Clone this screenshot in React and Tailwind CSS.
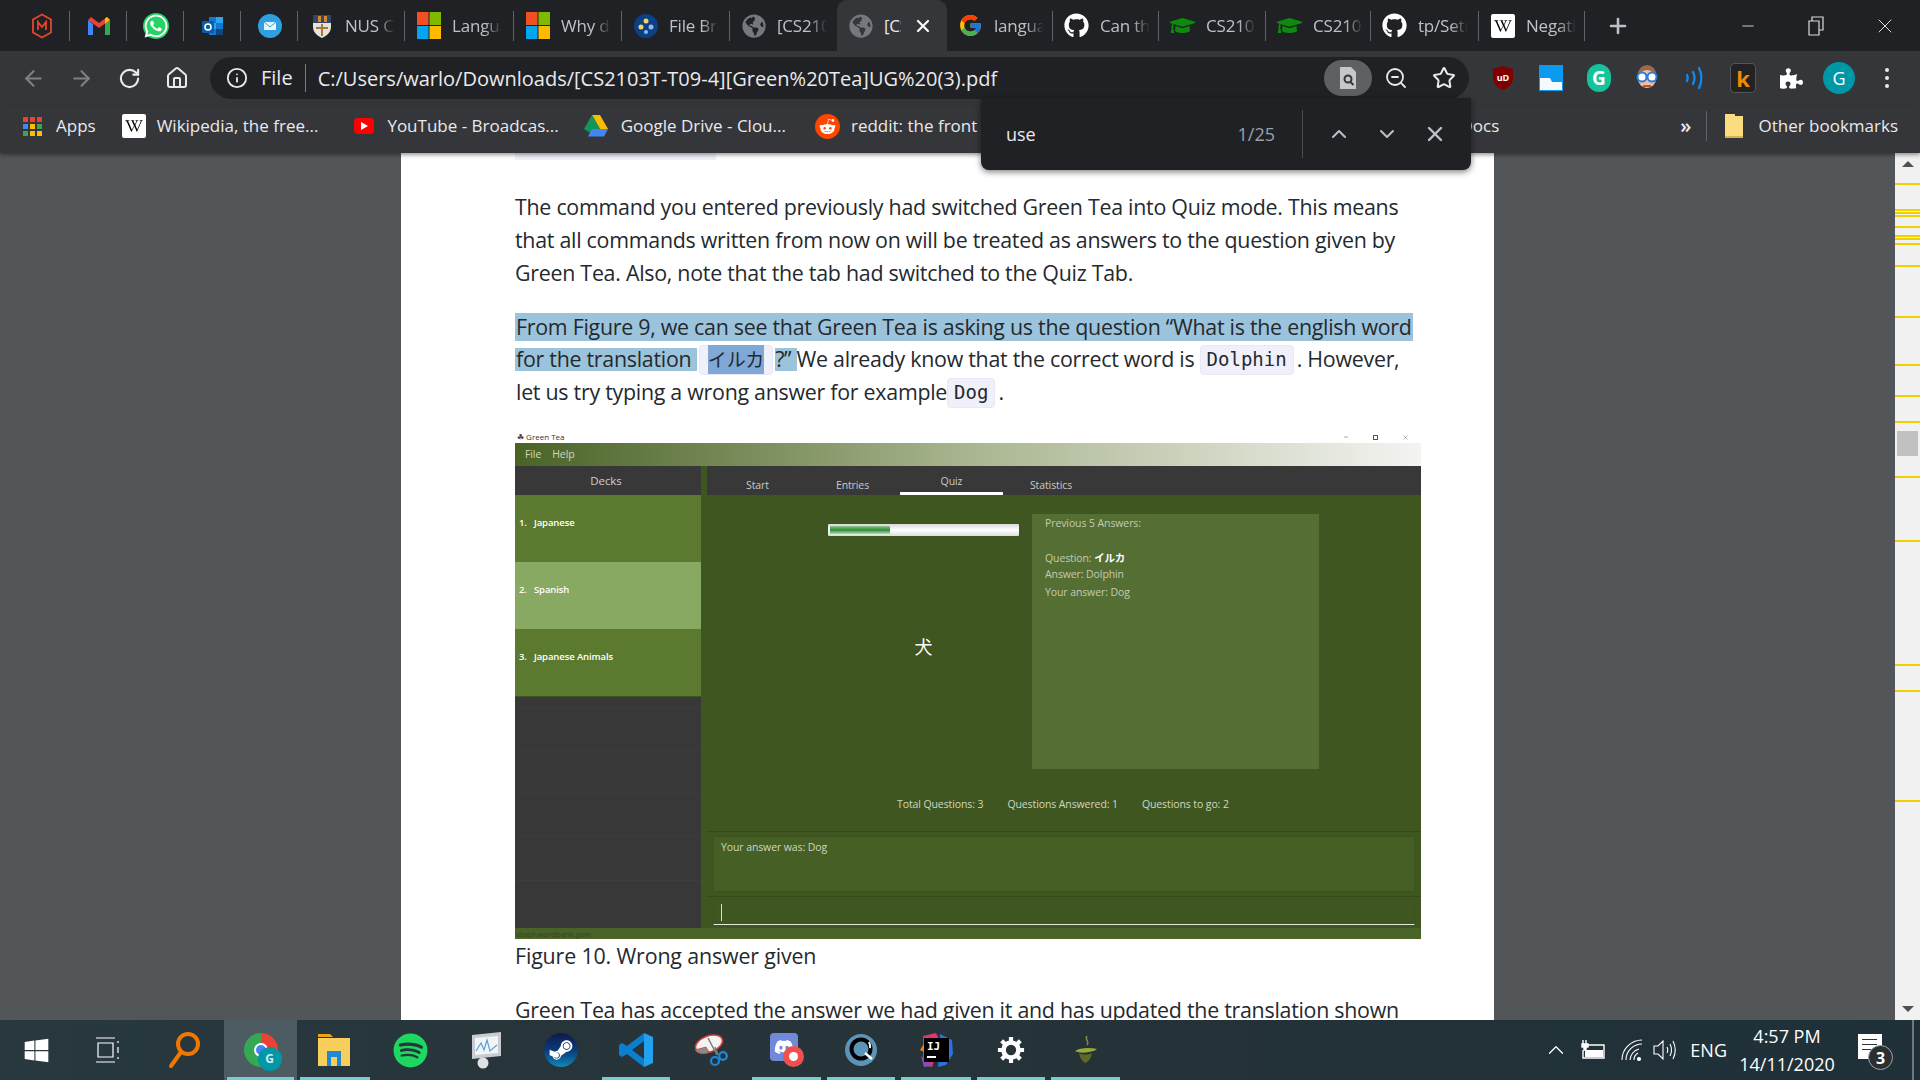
import {
  ArrowLeft, ArrowRight, RotateCw, Home, Info, ZoomOut, Star, ChevronUp, ChevronDown, X, Plus, Minus,
} from 'lucide-react';
import {
  FaWhatsapp, FaGithub, FaWikipediaW, FaRedditAlien, FaSteamSymbol, FaSpotify, FaDiscord, FaWindows,
  FaPuzzlePiece, FaGlobeAmericas, FaGraduationCap,
} from 'react-icons/fa';
import { FcGoogle } from 'react-icons/fc';

function HexM() {
  return (
    <svg width="22" height="26" viewBox="0 0 22 26" fill="none" stroke="#e8452c" strokeWidth="1.8">
      <path d="M11 1.5 20 6.5V19.500L11 24.500 2 19.500V6.500Z" />
      <path d="M7 17V9l4 5 4-5v8" />
    </svg>
  );
}

function Gmail() {
  return (
    <svg width="24" height="20" viewBox="0 0 24 20">
      <path d="M1 4v15h5V8z" fill="#4285f4" />
      <path d="M23 4v15h-5V8z" fill="#34a853" />
      <path d="M1 4l11 8 11-8-3-3-8 6-8-6z" fill="#ea4335" />
      <path d="M18 8l5-4-3-3-2 1.500z" fill="#fbbc04" />
    </svg>
  );
}

function Whatsapp() {
  return (
    <div className="relative flex h-[26px] w-[26px] items-center justify-center rounded-full bg-[#25d366]">
      <FaWhatsapp className="text-[26px] text-white" />
    </div>
  );
}

function Outlook() {
  return (
    <svg width="24" height="24" viewBox="0 0 24 24">
      <path d="M8 3h14v18H8z" fill="#0f78d4" />
      <path d="M15 3h7v6h-7zM8 9h7v6H8z" fill="#28a8ea" />
      <path d="M15 15h7v6h-7z" fill="#14447d" />
      <rect x="1" y="7" width="12" height="12" rx="1" fill="#0a5ba8" />
      <circle cx="7" cy="13" r="3" fill="none" stroke="#fff" strokeWidth="1.600" />
    </svg>
  );
}

function Mail() {
  return (
    <svg width="24" height="24" viewBox="0 0 24 24">
      <circle cx="12" cy="12" r="12" fill="#2e9fe0" />
      <path d="M6 8h12v8H6z" fill="#e8f4fb" />
      <path d="M6 8l6 5 6-5" fill="none" stroke="#2e9fe0" />
    </svg>
  );
}

function Shield() {
  return (
    <svg width="20" height="26" viewBox="0 0 20 26">
      <path d="M1 2h18v12c0 6-5 9-9 11-4-2-9-5-9-11z" fill="#e7e3d8" />
      <path d="M1 2h18v8H1z" fill="#33456b" />
      <path d="M6 3h3v6H6zM12 3h3v6h-3z" fill="#d68a2c" />
      <path d="M10 11v12M4 15h12" stroke="#a9763f" strokeWidth="2" />
    </svg>
  );
}

function Microsoft() {
  return (
    <svg width="24" height="27" viewBox="0 0 24 27">
      <path d="M0 0h11.500v13H0z" fill="#f25022" />
      <path d="M12.500 0H24v13H12.500z" fill="#7fba00" />
      <path d="M0 14h11.500v13H0z" fill="#00a4ef" />
      <path d="M12.500 14H24v13H12.500z" fill="#ffb900" />
    </svg>
  );
}

function FileBrowser() {
  return (
    <svg width="24" height="24" viewBox="0 0 24 24">
      <circle cx="12" cy="12" r="12" fill="#0b3f86" />
      <circle cx="12" cy="7" r="2.500" fill="#f4d35e" />
      <circle cx="7" cy="13" r="2.500" fill="#f4d35e" />
      <circle cx="17" cy="13" r="2.500" fill="#8db7e8" />
      <circle cx="12" cy="18" r="2" fill="#8db7e8" />
    </svg>
  );
}

function GhIcon() {
  return <FaGithub className="text-[25px] text-white" />;
}

function WikiIcon({ size = 'h-[24px] w-[24px] text-[18px]' }) {
  return (
    <div className={`flex items-center justify-center rounded-[2px] bg-white text-black ${size}`}>
      <FaWikipediaW />
    </div>
  );
}

const tabs = [
  { w: 57, icon: <HexM /> },
  { w: 57, icon: <Gmail /> },
  { w: 57, icon: <Whatsapp /> },
  { w: 57, icon: <Outlook /> },
  { w: 57, icon: <Mail /> },
  { w: 107, icon: <Shield />, title: 'NUS Communications' },
  { w: 109, icon: <Microsoft />, title: 'Language' },
  { w: 108, icon: <Microsoft />, title: 'Why do' },
  { w: 108, icon: <FileBrowser />, title: 'File Browser' },
  { w: 107, icon: <FaGlobeAmericas className="text-[24px] text-[#75787c]" />, title: '[CS2103T' },
  { w: 110, icon: <FaGlobeAmericas className="text-[24px] text-[#75787c]" />, title: '[CS', active: true },
  { w: 106, icon: <FcGoogle className="text-[25px]" />, title: 'language' },
  { w: 106, icon: <GhIcon />, title: 'Can this' },
  { w: 107, icon: <FaGraduationCap className="text-[25px] text-[#0e8a0e]" />, title: 'CS2103T' },
  { w: 105, icon: <FaGraduationCap className="text-[25px] text-[#0e8a0e]" />, title: 'CS2103T' },
  { w: 108, icon: <GhIcon />, title: 'tp/Setup' },
  { w: 106, icon: <WikiIcon />, title: 'Negation' },
];

function TabStrip() {
  return (
    <div className="flex h-[51px] shrink-0 items-stretch bg-[#202124] pl-[13px]">
      {tabs.map((t, i) => (
        <div
          key={i}
          style={{ width: t.w }}
          className={`relative flex items-center ${t.title ? 'pl-[11px]' : 'pl-[16px]'} ${t.active ? 'rounded-t-[10px] bg-[#35363a]' : ''}`}
        >
          <div className="flex w-[25px] shrink-0 justify-center">{t.icon}</div>
          {t.title && (
            <div
              className={`ml-[11px] overflow-hidden whitespace-nowrap text-[17px] tracking-[-0.2px] ${
                t.active
                  ? 'w-[17px] text-[#e8eaed]'
                  : 'w-[50px] text-[#bdc1c6] [mask-image:linear-gradient(to_right,black_65%,transparent)]'
              }`}
            >
              {t.title}
            </div>
          )}
          {t.active && <X size={20} strokeWidth={2.600} className="ml-[12px] text-white" />}
          {!t.active && i !== 9 && <div className="absolute right-0 top-[11px] h-[30px] w-px bg-[#5f6368]" />}
        </div>
      ))}
      <div className="flex w-[66px] items-center justify-center">
        <Plus size={24} strokeWidth={2.600} className="text-[#bdc1c6]" />
      </div>
      <div className="ml-auto flex items-center text-[#dcdcdc]">
        <div className="flex w-[68px] justify-center"><Minus size={18} strokeWidth={1.200} /></div>
        <div className="flex w-[68px] justify-center">
          <svg width="16" height="20" viewBox="0 0 16 20" fill="none" stroke="currentColor" strokeWidth="1.200">
            <path d="M1 5h10v14H1zM4 5V1h11v13h-4" />
          </svg>
        </div>
        <div className="flex w-[70px] justify-center"><X size={24} strokeWidth={1} /></div>
      </div>
    </div>
  );
}

function ToolBtn({ children }) {
  return <div className="flex w-[48px] shrink-0 items-center justify-center">{children}</div>;
}

function UBlock() {
  return (
    <svg width="22" height="26" viewBox="0 0 22 26">
      <path d="M11 1l10 3v9c0 6-5 10-10 12C6 23 1 19 1 13V4z" fill="#800000" />
      <text x="11" y="16" textAnchor="middle" fontSize="9" fontWeight="700" fill="#fff">uD</text>
    </svg>
  );
}

function BlueExt() {
  return (
    <svg width="24" height="26" viewBox="0 0 24 26">
      <path d="M0 0h24v26H0z" fill="#0a9bf0" />
      <path d="M1 13h10l2 4h10v8H1z" fill="#f4f9fc" />
    </svg>
  );
}

function Goggles() {
  return (
    <svg width="24" height="28" viewBox="0 0 24 28">
      <circle cx="12" cy="10" r="9" fill="#9a6a4a" />
      <circle cx="12" cy="15" r="9" fill="#eebfa0" />
      <circle cx="7" cy="13" r="4.500" fill="#fff" stroke="#2a7fd6" strokeWidth="2" />
      <circle cx="17" cy="13" r="4.500" fill="#fff" stroke="#2a7fd6" strokeWidth="2" />
      <path d="M8 22h8" stroke="#c0503c" strokeWidth="2" />
    </svg>
  );
}

function WaveExt() {
  return (
    <svg width="22" height="26" viewBox="0 0 22 26" fill="none" stroke="#1187f0" strokeWidth="2.400" strokeLinecap="round">
      <path d="M3 10c1 2 1 4 0 6M9 7c2 4 2 8 0 12M15 3c3 6 3 14 0 20" />
    </svg>
  );
}

function KExt() {
  return (
    <div className="flex h-[28px] w-[24px] items-center justify-center rounded-[4px] bg-[#222] font-bold text-[22px] leading-none text-[#f08a00] ring-1 ring-[#555]">
      k
    </div>
  );
}

function Toolbar() {
  return (
    <div className="flex h-[54px] shrink-0 items-center bg-[#35363a] pl-[9px] text-[#e8eaed]">
      <ToolBtn><ArrowLeft size={25} strokeWidth={2} className="text-[#7e8084]" /></ToolBtn>
      <ToolBtn><ArrowRight size={25} strokeWidth={2} className="text-[#7e8084]" /></ToolBtn>
      <ToolBtn><RotateCw size={23} strokeWidth={2.200} className="text-[#e8eaed]" /></ToolBtn>
      <ToolBtn><Home size={24} strokeWidth={2} className="text-[#e8eaed]" /></ToolBtn>
      <div className="ml-[9px] flex h-[42px] w-[1259px] shrink-0 items-center rounded-full bg-[#202124] pl-[16px]">
        <Info size={22} strokeWidth={2} />
        <span className="ml-[13px] text-[20px]">File</span>
        <div className="ml-[12px] h-[28px] w-px bg-[#7a7c80]" />
        <span className="ml-[12px] pt-[2px] text-[20px]">C:/Users/warlo/Downloads/[CS2103T-T09-4][Green%20Tea]UG%20(3).pdf</span>
        <div className="ml-auto mr-[1px] flex items-center">
          <div className="flex h-[36px] w-[48px] items-center justify-center rounded-full bg-[#5f6063]">
            <svg width="18" height="22" viewBox="0 0 18 22">
              <path d="M1 0h11l5 5v17H1z" fill="#c6c7c9" />
              <circle cx="9" cy="12" r="3.500" fill="none" stroke="#35363a" strokeWidth="2" />
              <path d="M11.500 15l3 3" stroke="#35363a" strokeWidth="2" />
            </svg>
          </div>
          <div className="flex w-[48px] justify-center"><ZoomOut size={24} strokeWidth={1.800} /></div>
          <div className="flex w-[48px] justify-center"><Star size={24} strokeWidth={2} /></div>
        </div>
      </div>
      <div className="ml-[10px] flex">
        <ToolBtn><UBlock /></ToolBtn>
        <ToolBtn><BlueExt /></ToolBtn>
        <ToolBtn>
          <div className="flex h-[28px] w-[24px] items-center justify-center rounded-full bg-[#15c39a] text-[19px] font-bold text-white">G</div>
        </ToolBtn>
        <ToolBtn><Goggles /></ToolBtn>
        <ToolBtn><WaveExt /></ToolBtn>
        <ToolBtn><KExt /></ToolBtn>
        <ToolBtn><FaPuzzlePiece className="text-[23px] text-white" /></ToolBtn>
        <ToolBtn>
          <div className="flex h-[32px] w-[32px] items-center justify-center rounded-full bg-[#0097a7] text-[18px] text-white">G</div>
        </ToolBtn>
        <ToolBtn>
          <div className="flex flex-col gap-[4px]">
            <span className="h-[4px] w-[4px] rounded-full bg-[#e8eaed]" />
            <span className="h-[4px] w-[4px] rounded-full bg-[#e8eaed]" />
            <span className="h-[4px] w-[4px] rounded-full bg-[#e8eaed]" />
          </div>
        </ToolBtn>
      </div>
    </div>
  );
}

function AppsGrid() {
  const colors = ['#ea4335', '#ea4335', '#ea4335', '#4285f4', '#fbbc04', '#34a853', '#34a853', '#fbbc04', '#fbbc04'];
  return (
    <div className="grid grid-cols-3 gap-[2px]">
      {colors.map((c, i) => (
        <span key={i} style={{ backgroundColor: c }} className="h-[5px] w-[5px]" />
      ))}
    </div>
  );
}

function Drive() {
  return (
    <svg width="24" height="22" viewBox="0 0 24 22">
      <path d="M8 0h8l8 14h-8z" fill="#fbbc04" />
      <path d="M8 0l8 14-4 7.500L0 14z" fill="#0f9d58" opacity="0.950" />
      <path d="M4 21.500 8 14h16l-4 7.500z" fill="#4285f4" />
    </svg>
  );
}

function Bookmarks() {
  return (
    <div className="relative z-10 flex h-[48px] shrink-0 items-center bg-[#35363a] pb-[6px] pl-[23px] text-[17px] text-[#e8eaed] shadow-[0_2px_4px_rgba(0,0,0,0.4)]">
      <AppsGrid />
      <span className="ml-[14px]">Apps</span>
      <div className="ml-[26px] flex items-center gap-[11px]">
        <WikiIcon />
        <span>Wikipedia, the free...</span>
      </div>
      <div className="ml-[36px] flex items-center gap-[13px]">
        <div className="flex h-[16px] w-[20px] items-center justify-center rounded-[4px] bg-[#f00]">
          <span className="h-0 w-0 border-y-[4px] border-l-[7px] border-y-transparent border-l-white" />
        </div>
        <span>YouTube - Broadcas...</span>
      </div>
      <div className="ml-[25px] flex items-center gap-[13px]">
        <Drive />
        <span>Google Drive - Clou...</span>
      </div>
      <div className="ml-[29px] flex items-center gap-[11px]">
        <div className="flex h-[25px] w-[25px] items-center justify-center rounded-full bg-[#ff4500]">
          <FaRedditAlien className="text-[17px] text-white" />
        </div>
        <span className="whitespace-nowrap">reddit: the front page</span>
      </div>
      <span className="ml-auto">Docs</span>
      <span className="ml-[181px] text-[20px] font-semibold">»</span>
      <div className="ml-[15px] h-[30px] w-px bg-[#5f6368]" />
      <div className="ml-[18px] mr-[22px] flex items-center gap-[15px]">
        <svg width="18" height="24" viewBox="0 0 18 24">
          <path d="M0 0h10v2h8v22H0z" fill="#fbdc7f" />
          <path d="M0 22h18v2H0z" fill="#d8b252" />
        </svg>
        <span>Other bookmarks</span>
      </div>
    </div>
  );
}

function FindBar() {
  return (
    <div className="absolute left-[981px] top-[98px] z-20 flex h-[72px] w-[490px] items-center rounded-b-[8px] bg-[#202124] pl-[25px] text-[18px] shadow-[0_2px_6px_rgba(0,0,0,0.5)]">
      <span className="text-[#e8eaed]">use</span>
      <span className="ml-auto text-[#9aa0a6]">1/25</span>
      <div className="ml-[27px] h-[48px] w-px bg-[#4a4c50]" />
      <div className="flex">
        <div className="ml-[12px] flex w-[48px] justify-center"><ChevronUp size={24} className="text-[#bdc1c6]" /></div>
        <div className="flex w-[48px] justify-center"><ChevronDown size={24} className="text-[#bdc1c6]" /></div>
        <div className="mr-[12px] flex w-[48px] justify-center"><X size={24} strokeWidth={2.400} className="text-[#bdc1c6]" /></div>
      </div>
    </div>
  );
}

function Code({ children, className = '' }) {
  return (
    <span className={`inline-flex h-[30px] items-center rounded-[4px] border border-[#e8e8f6] bg-[#f0f0fb] px-[6px] font-['DejaVu_Sans_Mono',monospace] text-[19px] tracking-normal ${className}`}>
      {children}
    </span>
  );
}

function Line({ children, className = '' }) {
  return <div className={`flex h-[33px] items-center whitespace-pre ${className}`}>{children}</div>;
}

const sel = 'bg-[#9cc3dc]';

function GreenTeaWindow() {
  return (
    <div className="w-[906px] tracking-normal">
      <div className="flex h-[12px] items-center justify-between bg-white pr-[12px] text-[8px] leading-none text-[#333]">
        <span className="pl-[2px]">☘ Green Tea</span>
        <div className="flex items-center gap-[24px] text-[#555]">
          <Minus size={6} strokeWidth={2} />
          <span className="h-[5px] w-[5px] border border-[#555]" />
          <X size={7} strokeWidth={1.500} />
        </div>
      </div>
      <div className="flex h-[496px] flex-col bg-[#3f5620] text-[10.500px] tracking-[-0.1px] text-[#cfd6c2]">
        <div className="flex h-[23px] shrink-0 items-center gap-[11px] bg-gradient-to-r from-[#4a6325] via-[#a9b58f] to-[#f4f4f2] pl-[10px]">
          <span>File</span>
          <span>Help</span>
        </div>
        <div className="flex min-h-0 flex-1">
          <div className="flex w-[186px] shrink-0 flex-col bg-[#383838]">
            <div className="flex h-[29px] items-center justify-center pr-[4px] text-[11.500px] text-[#cfcfcf]">Decks</div>
            <div className="flex h-[67px] items-center whitespace-pre bg-[#5b7a2f] pb-[11px] pl-[4px] text-[9.500px] font-semibold text-white">1.   Japanese</div>
            <div className="flex h-[67px] items-center whitespace-pre bg-[#87a961] pb-[11px] pl-[4px] text-[9.500px] font-semibold text-white">2.   Spanish</div>
            <div className="flex h-[68px] items-center whitespace-pre border-b border-[#3f5620] bg-[#5b7a2f] pb-[11px] pl-[4px] text-[9.500px] font-semibold text-white">3.   Japanese Animals</div>
            <div className="flex flex-1 flex-col divide-y divide-[#3d3d3d]">
              <div className="h-[11px]" />
              <div className="h-[43px]" />
              <div className="h-[43px]" />
              <div className="h-[43px]" />
              <div className="h-[44px]" />
              <div className="h-[43px]" />
            </div>
          </div>
          <div className="w-[6px] shrink-0" />
          <div className="flex min-w-0 flex-1 flex-col">
            <div className="flex h-[29px] shrink-0 bg-[#383838] pl-[3px] text-[#c9c9c9]">
              <div className="flex w-[95px] items-end justify-center pb-[1px]">Start</div>
              <div className="flex w-[95px] items-end justify-center pb-[1px]">Entries</div>
              <div className="flex w-[103px] items-end justify-center border-b-[3px] border-white pb-[2px]">Quiz</div>
              <div className="flex w-[96px] items-end justify-center pb-[1px]">Statistics</div>
            </div>
            <div className="flex h-[336px] shrink-0 flex-col pt-[19px]">
              <div className="flex h-[255px] shrink-0">
                <div className="w-[325px] shrink-0 pl-[121px] pt-[10px]">
                  <div className="h-[12px] w-[191px] rounded-[1px] bg-gradient-to-b from-[#d8d8d8] via-white to-[#dcdcdc] p-[2px]">
                    <div className="h-full w-[60px] bg-gradient-to-b from-[#8fc28f] via-[#1e8f2e] to-[#b9dcb9]" />
                  </div>
                  <div className="mt-[98px] w-[191px] text-center font-['Noto_Sans_CJK_JP',sans-serif] text-[18px] leading-[24px] text-white">犬</div>
                </div>
                <div className="w-[287px] shrink-0 bg-[#546e34] pl-[13px] pt-[1px] text-[#c3ccb3]">
                  <div className="h-[16px] leading-[16px]">Previous 5 Answers:</div>
                  <div className="mt-[18px] h-[17px] leading-[17px]">
                    Question: <span className="font-['Noto_Sans_CJK_JP',sans-serif] font-bold text-white">イルカ</span>
                  </div>
                  <div className="h-[17px] leading-[17px]">Answer: Dolphin</div>
                  <div className="h-[18px] leading-[18px]">Your answer: Dog</div>
                </div>
              </div>
              <div className="mt-[27px] flex h-[16px] items-center gap-[24px] pl-[190px] leading-[16px]">
                <span>Total Questions: 3</span>
                <span>Questions Answered: 1</span>
                <span>Questions to go: 2</span>
              </div>
            </div>
            <div className="flex flex-1 flex-col border-t border-[#354a1b] px-[6px] pt-[4px]">
              <div className="h-[56px] shrink-0 border border-[#3c5320] bg-[#465f24] pl-[7px] pt-[2px] leading-[16px]">Your answer was: Dog</div>
              <div className="-mx-[6px] mt-[4px] h-px shrink-0 bg-[#354a1b]" />
              <div className="mt-[2px] flex h-[26px] shrink-0 items-center border-x border-t border-b border-x-[#3c5320] border-t-[#3c5320] border-b-[#e4e8dc] pl-[7px]">
                <div className="h-[17px] w-px bg-[#d8ddd0]" />
              </div>
            </div>
          </div>
        </div>
        <div className="flex h-[11px] shrink-0 items-center bg-[#4a6328] text-[8px] leading-none text-[#33441c]">\data\wordbank.json</div>
      </div>
    </div>
  );
}

function PdfPage() {
  return (
    <div className="w-[1093px] shrink-0 overflow-hidden bg-white pl-[114px] text-[21.400px] tracking-[-0.27px] text-[#24292e]">
      <div className="h-[7px] w-[201px] bg-[#f0f0fb]" />
      <div className="mt-[31px]">
        <Line>The command you entered previously had switched Green Tea into Quiz mode. This means</Line>
        <Line>that all commands written from now on will be treated as answers to the question given by</Line>
        <Line>Green Tea. Also, note that the tab had switched to the Quiz Tab.</Line>
      </div>
      <div className="mt-[20px]">
        <Line>
          <span className={`${sel} flex h-[28px] w-[898px] items-center pl-[1px] pt-[2px]`}>From Figure 9, we can see that Green Tea is asking us the question “What is the english word</span>
        </Line>
        <Line>
          <span className={`${sel} flex h-[23px] items-center pl-[1px]`}>for the translation </span>
          <Code className="mx-[2px] font-['Noto_Sans_CJK_JP',sans-serif] !px-[8px]">
            <span className="bg-[#7fa8d6]">イルカ</span>
          </Code>
          <span className={`${sel} flex h-[23px] items-center`}>?” </span>
          <span>We already know that the correct word is </span>
          <Code>Dolphin</Code>
          <span className="ml-[3px]">. However,</span>
        </Line>
        <Line>
          <span className="pl-[1px]">let us try typing a wrong answer for example</span>
          <Code>Dog</Code>
          <span className="ml-[3px]">.</span>
        </Line>
      </div>
      <div className="mt-[22px]">
        <GreenTeaWindow />
      </div>
      <Line className="pt-[2px] tracking-[-0.15px]">Figure 10. Wrong answer given</Line>
      <div className="mt-[21px]">
        <Line className="pt-[2px]">Green Tea has accepted the answer we had given it and has updated the translation shown</Line>
      </div>
    </div>
  );
}

const ticks = [183, 209, 212, 215, 226, 235, 238, 243, 265, 316, 364, 395, 421, 476, 540, 664, 690, 800];

function Scrollbar() {
  return (
    <div className="relative flex w-[25px] shrink-0 flex-col items-center justify-between bg-[#f1f1f1] py-[8px]">
      {ticks.map(y => (
        <div
          key={y}
          style={{ top: y - 153 }}
          className="absolute left-0 h-[2px] w-full bg-[#f2cf00]"
        />
      ))}
      <div className="absolute left-[2px] top-[278px] h-[25px] w-[21px] bg-[#c1c1c1]" />
      <span className="h-0 w-0 border-x-[6px] border-b-[6px] border-x-transparent border-b-[#505050]" />
      <span className="h-0 w-0 border-x-[6px] border-t-[6px] border-x-transparent border-t-[#505050]" />
    </div>
  );
}

function VsCode() {
  return (
    <svg width="34" height="36" viewBox="0 0 34 36">
      <path d="M25 9 13 18l12 9v8L8 22l-5 3-3-2V13l3-2 5 3L25 1z" fill="#0a7fd0" />
      <path d="M25 1l9 4v26l-9 4z" fill="#22a2ee" />
    </svg>
  );
}

function ChromeG() {
  return (
    <div className="relative h-[34px] w-[34px]">
      <div className="h-[34px] w-[34px] rounded-full bg-[conic-gradient(#ea4335_0_33%,#fbbc04_33%_45%,#34a853_45%_100%)]" />
      <div className="absolute left-[10px] top-[10px] h-[14px] w-[14px] rounded-full border-2 border-white bg-[#4285f4]" />
      <div className="absolute left-[14px] top-[14px] flex h-[24px] w-[24px] items-center justify-center rounded-full bg-[#0097a7] text-[12px] font-bold text-[#cdeef1]">G</div>
    </div>
  );
}

function Snip() {
  return (
    <svg width="34" height="34" viewBox="0 0 34 34" fill="none">
      <ellipse cx="15" cy="11" rx="14" ry="8" transform="rotate(-20 15 11)" fill="#f3f3f3" stroke="#d84040" strokeWidth="1.600" />
      <path d="M1 17c3 4 9 5 14 2l-3-5z" fill="#8a8a8a" stroke="#d84040" strokeWidth="0.800" />
      <path d="M14 5l9 17M21 14l3 8" stroke="#7a7a7a" strokeWidth="1.500" />
      <circle cx="21" cy="28" r="4" stroke="#1e88d8" strokeWidth="2.200" />
      <circle cx="29" cy="23" r="3.800" stroke="#1e88d8" strokeWidth="2.200" />
    </svg>
  );
}

function DiscordRec() {
  return (
    <div className="relative h-[34px] w-[34px]">
      <div className="flex h-[28px] w-[28px] items-center justify-center rounded-[4px] bg-[#7289da]">
        <FaDiscord className="text-[20px] text-white" />
      </div>
      <div className="absolute bottom-0 right-0 flex h-[21px] w-[21px] items-center justify-center rounded-full bg-[#ee5050]">
        <span className="h-[9px] w-[9px] rounded-full bg-white" />
      </div>
    </div>
  );
}

function QApp() {
  return (
    <svg width="32" height="32" viewBox="0 0 32 32">
      <circle cx="16" cy="16" r="16" fill="#5c94b8" />
      <circle cx="16" cy="15" r="9.500" fill="#5c94b8" stroke="#000" strokeWidth="4" />
      <path d="M20 19l7 6" stroke="#fff" strokeWidth="2.500" />
      <path d="M24 8a10 10 0 0 1 1 6" stroke="#fff" strokeWidth="2" fill="none" />
    </svg>
  );
}

function Intellij() {
  return (
    <svg width="36" height="36" viewBox="0 0 36 36">
      <path d="M5 4 18 1l4 8-8 26-9-2z" fill="#e8336f" />
      <path d="M2 18l5-8 3 12z" fill="#f07d1a" />
      <path d="M3 24l12 10-9 1z" fill="#8a4bb5" />
      <path d="M22 2l12 6 1 14-7 11-8 2z" fill="#2f6fe0" />
      <path d="M6 6h25v24H6z" fill="#000" />
      <text x="9" y="18" fontSize="11" fontWeight="700" fill="#fff" fontFamily="DejaVu Sans Mono, monospace">IJ</text>
      <path d="M9 24h9v2H9z" fill="#fff" />
    </svg>
  );
}

function Gear() {
  return (
    <svg width="28" height="28" viewBox="0 0 30 30" fill="none" stroke="#fff">
      <circle cx="15" cy="15" r="8" strokeWidth="5" />
      <path d="M15 1v6M15 23v6M1 15h6M23 15h6M5 5l4 4M21 21l4 4M25 5l-4 4M9 21l-4 4" strokeWidth="4.500" />
    </svg>
  );
}

function Leaf() {
  return (
    <svg width="24" height="30" viewBox="0 0 24 30" fill="none">
      <path d="M13 1c-3 3 3 5 0 9" stroke="#7f8f4a" strokeWidth="1.500" />
      <path d="M1 16c4-3 14-4 22-2-2 2-5 2-8 3-5 1-10 1-14-1z" fill="#9aaa3a" />
      <path d="M5 18c4 2 9 2 13 0-1 6-4 9-7 10-3-2-5-5-6-10z" fill="#5c6a26" />
    </svg>
  );
}

function Monitor() {
  return (
    <svg width="34" height="38" viewBox="0 0 34 38">
      <path d="M3 4l29-3v24L3 28z" fill="#c8ccd0" />
      <path d="M6 7l23-2v17L6 24z" fill="#f2f4f6" />
      <path d="M7 20l5-8 3 7 3-10 3 11 7-6" stroke="#5aa0d8" strokeWidth="1.200" fill="none" />
      <circle cx="14" cy="32" r="5.500" fill="#dfe1e3" />
    </svg>
  );
}

function FilesIcon() {
  return (
    <svg width="34" height="32" viewBox="0 0 34 32">
      <path d="M0 0h12l3 3h-15z" fill="#e8a317" />
      <path d="M0 4h32v28H0z" fill="#f8ce5a" />
      <path d="M9 17h14v15h-4v-9h-6v9H9z" fill="#1f88d8" />
    </svg>
  );
}

function TaskView() {
  return (
    <svg width="26" height="26" viewBox="0 0 26 26" fill="none" stroke="#fff" strokeWidth="1.200">
      <path d="M1 1h19M1 25h19M3 6v14h15V6zM1 4" />
      <path d="M23 4v2M23 10v6M23 20v2" />
    </svg>
  );
}

function SteamIcon() {
  return (
    <div className="flex h-[34px] w-[34px] items-center justify-center rounded-full bg-gradient-to-b from-[#0d1b4c] via-[#0b3a78] to-[#1387b8]">
      <FaSteamSymbol className="text-[26px] text-white" />
    </div>
  );
}

const taskItems = [
  { w: 72, icon: <FaWindows className="text-[27px] text-white" /> },
  { w: 72, icon: <TaskView /> },
  { w: 80, icon: <svg width="34" height="38" viewBox="0 0 34 38" fill="none" stroke="#f07800" strokeWidth="4"><circle cx="21" cy="13" r="10" /><path d="M14 21 4 35" strokeLinecap="round" /></svg> },
  { w: 73, icon: <ChromeG />, run: true, active: true },
  { w: 76, icon: <FilesIcon />, run: true },
  { w: 75, icon: <FaSpotify className="text-[35px] text-[#1ed760]" /> },
  { w: 75, icon: <Monitor /> },
  { w: 76, icon: <SteamIcon /> },
  { w: 74, icon: <VsCode />, run: true },
  { w: 76, icon: <Snip /> },
  { w: 75, icon: <DiscordRec />, run: true },
  { w: 74, icon: <QApp />, run: true },
  { w: 76, icon: <Intellij />, run: true },
  { w: 74, icon: <Gear />, run: true },
  { w: 75, icon: <Leaf />, run: true },
];

function Taskbar() {
  return (
    <div className="flex h-[60px] shrink-0 items-stretch bg-gradient-to-r from-[#28383f] via-[#263338] to-[#1f3038] text-white">
      {taskItems.map((t, i) => (
        <div
          key={i}
          style={{ width: t.w }}
          className={`relative flex items-center justify-center ${t.active ? 'bg-[#4d5b62]' : ''}`}
        >
          {t.icon}
          {t.run && <div className="absolute bottom-0 left-[3px] right-[3px] h-[3px] bg-[#76cdd0]" />}
        </div>
      ))}
      <div className="ml-auto flex items-center">
        <ChevronUp size={26} strokeWidth={1.200} className="mr-[11px]" />
        <svg width="26" height="20" viewBox="0 0 26 20" fill="none" stroke="#fff" strokeWidth="1.400">
          <path d="M3 0v4M6 0v4M2 4h6v3H6v3H4V7H2z" fill="#fff" />
          <path d="M6 5h18v13H3v-8" />
          <path d="M5 10h18v7H5z" fill="#fff" stroke="none" />
        </svg>
        <svg className="ml-[14px]" width="24" height="24" viewBox="0 0 24 24" fill="none" stroke="#fff" strokeWidth="1.100">
          <path d="M2 22A20 20 0 0 1 22 2M6 22A16 16 0 0 1 22 6M10 22A12 12 0 0 1 19 11M14 22a8 8 0 0 1 4-7" />
          <circle cx="19" cy="21" r="1.500" fill="#fff" />
        </svg>
        <svg className="ml-[9px]" width="24" height="24" viewBox="0 0 24 24" fill="none" stroke="#fff" strokeWidth="1.100">
          <path d="M1 8h4l5-5v18l-5-5H1zM14 9c1 2 1 4 0 6M17 6c2 4 2 8 0 12M20 3c3 6 3 12 0 18" />
        </svg>
        <span className="ml-[13px] text-[18px]">ENG</span>
        <div className="ml-[11px] flex w-[98px] flex-col items-center text-[18px] leading-[28px]">
          <span>4:57 PM</span>
          <span>14/11/2020</span>
        </div>
        <div className="relative ml-[22px] mr-[30px] h-[32px] w-[24px]">
          <div className="h-[25px] w-[24px] bg-white pl-[4px] pt-[5px]">
            <div className="h-px w-[15px] bg-[#26363d]" />
            <div className="mt-[4px] h-px w-[15px] bg-[#26363d]" />
            <div className="mt-[4px] h-px w-[10px] bg-[#26363d]" />
          </div>
          <div className="absolute -right-[11px] top-[11px] flex h-[25px] w-[25px] items-center justify-center rounded-full border border-[#9aa5aa] bg-[#2c2f31] text-[16px] font-bold leading-none">3</div>
        </div>
        <div className="mr-[6px] h-full w-[2px] bg-[#6b7a80]" />
      </div>
    </div>
  );
}

export default function App() {
  return (
    <div className="relative flex h-[1080px] w-[1920px] flex-col overflow-hidden bg-[#525659] font-['Open_Sans',sans-serif]">
      <TabStrip />
      <Toolbar />
      <Bookmarks />
      <FindBar />
      <div className="flex min-h-0 flex-1">
        <div className="w-[401px] shrink-0 bg-[#525659]" />
        <PdfPage />
        <div className="w-[401px] shrink-0 bg-[#525659]" />
        <Scrollbar />
      </div>
      <Taskbar />
    </div>
  );
}
